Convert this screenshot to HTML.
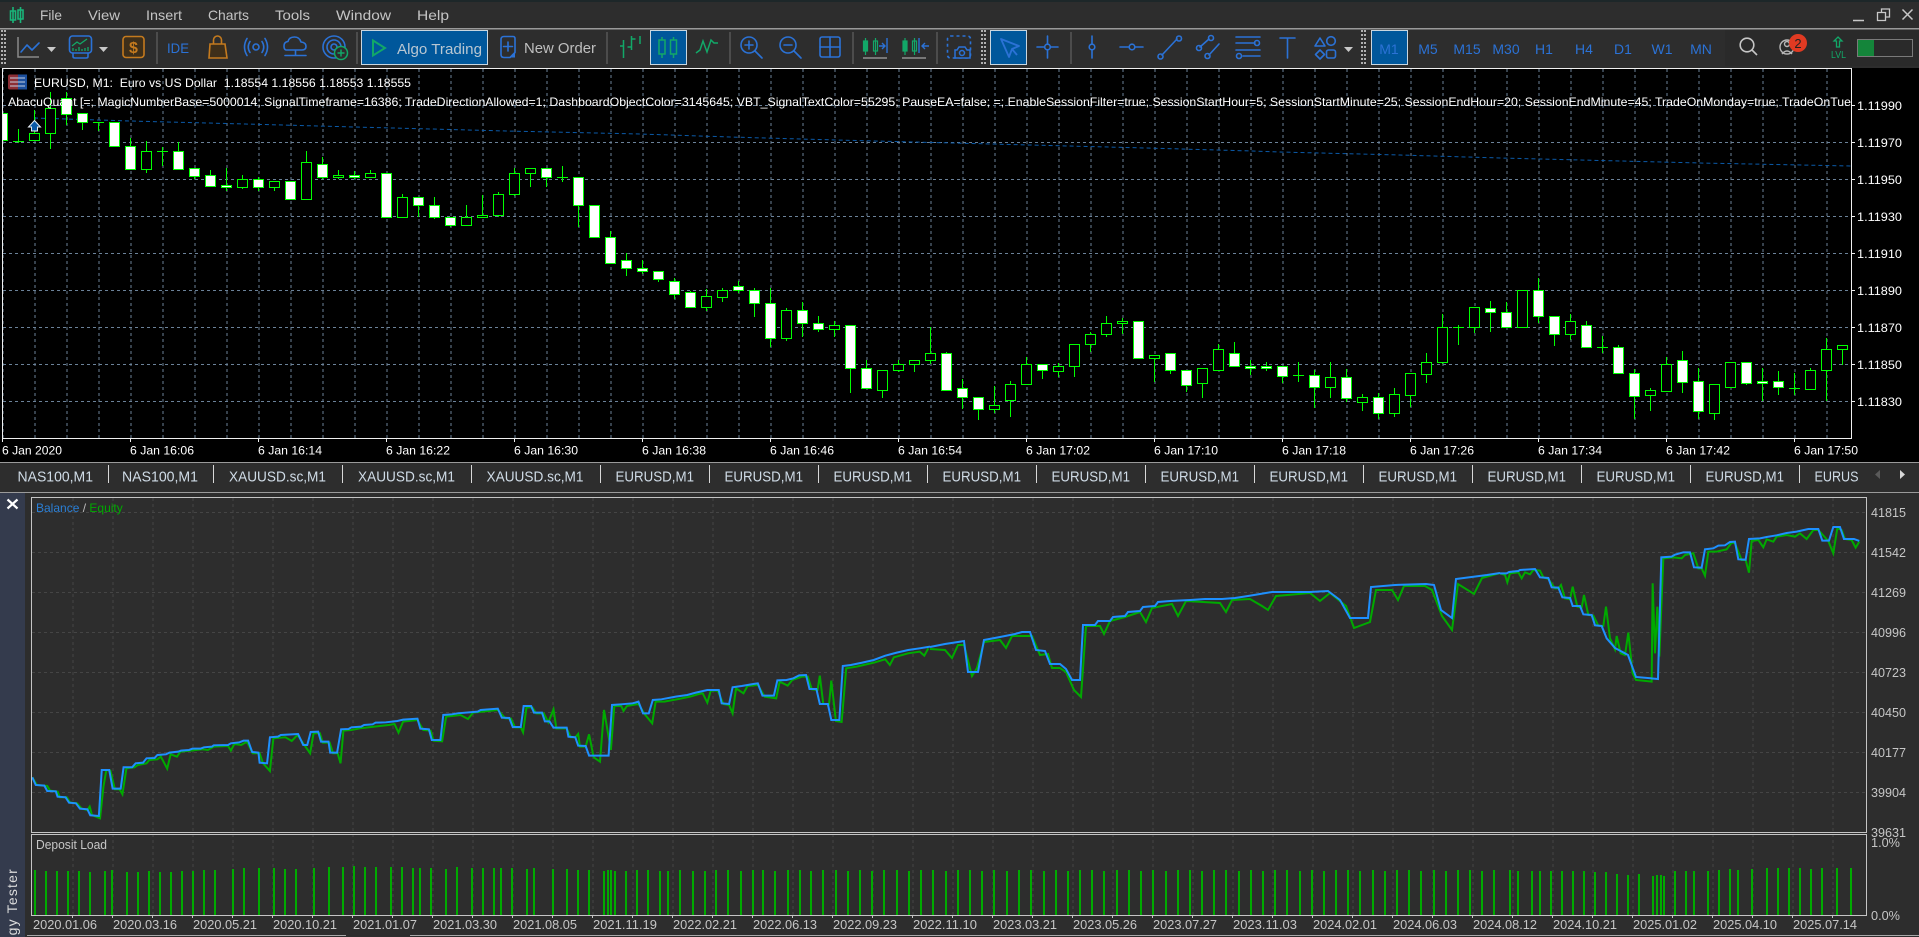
<!DOCTYPE html>
<html lang="en"><head><meta charset="utf-8"><title>MetaTrader 5</title>
<style>
html,body{margin:0;padding:0;background:#2d2d2d;overflow:hidden}
svg{display:block;font-family:"Liberation Sans",Arial,sans-serif}
.m{font-size:14px;fill:#c4c4c4}
.tf{font-size:14px;fill:#2b72d6;text-anchor:middle}
.t{font-size:12px;fill:#fff}
.p{font-size:12px;fill:#fff}
.tab{font-size:15px;fill:#cfdbe6}
.q{font-size:13px;fill:#c6c6c6}
.d{font-size:12.5px;fill:#c6c6c6}
.b{fill:none;stroke:#2b72d6;stroke-width:1.6;stroke-linecap:round;stroke-linejoin:round}
.g{fill:none;stroke:#12a868;stroke-width:1.5}
.o{fill:none;stroke:#c47a1e;stroke-width:1.6}
.s{stroke:#6a6a6a;stroke-width:1}
</style></head><body>
<svg width="1919" height="937" viewBox="0 0 1919 937" xmlns="http://www.w3.org/2000/svg">
<rect width="1919" height="937" fill="#2d2d2d"/>
<rect width="1919" height="2" fill="#1d2729"/>
<rect y="28" width="1919" height="1.5" fill="#9a9a9a"/>
<rect x="1725" y="30" width="194" height="36" fill="#2a2a2a"/>

<!-- menu -->
<path d="M13 7v16M10.5 11h5v9h-5zM20.5 7v16M18 10h5v9h-5z" fill="none" stroke="#19b57a" stroke-width="1.6"/>
<text class="m" x="40" y="20" textLength="22" lengthAdjust="spacingAndGlyphs">File</text>
<text class="m" x="88" y="20" textLength="32" lengthAdjust="spacingAndGlyphs">View</text>
<text class="m" x="146" y="20" textLength="36" lengthAdjust="spacingAndGlyphs">Insert</text>
<text class="m" x="208" y="20" textLength="41" lengthAdjust="spacingAndGlyphs">Charts</text>
<text class="m" x="275" y="20" textLength="35" lengthAdjust="spacingAndGlyphs">Tools</text>
<text class="m" x="336" y="20" textLength="55" lengthAdjust="spacingAndGlyphs">Window</text>
<text class="m" x="417" y="20" textLength="32" lengthAdjust="spacingAndGlyphs">Help</text>
<g fill="none" stroke="#c8c8c8" stroke-width="1.3">
<path d="M1853 20.5h11" stroke-width="1.5"/><path d="M1877.5 12.5h8v8h-8zM1881.5 12.5v-3.5h8v8h-4"/><path d="M1902.5 9.5l10 10M1912.5 9.5l-10 10" stroke-width="1.5"/>
</g>

<!-- grips -->
<g fill="none" stroke="#d0d0d0" stroke-width="1.6" stroke-dasharray="2 2"><path d="M2 30v36M5 30v36M982 30v36M985 30v36M1362 30v36M1365 30v36"/></g>
<g class="s"><path d="M157 32v32M357 32v32M607 32v32M730 32v32M853 32v32M937 32v32M1071 32v32"/></g>

<!-- left toolbar icons -->
<path d="M18 37v20h21" fill="none" stroke="#8a8a8a" stroke-width="1.5"/>
<path class="b" d="M21 52l6-7 5 5 7-7"/>
<path d="M47 47h9l-4.5 5z" fill="#c8c8c8"/>
<rect x="69.5" y="36" width="22" height="17" rx="3" class="b"/><path class="b" d="M73 53v3.5q0 1.5 2 1.5h11q2 0 2-1.5V53"/>
<path d="M72 46l5-4 3 2 7-5" fill="none" stroke="#12a868" stroke-width="1.3"/><path d="M73 51v-3M76 51v-2M79 51v-4M82 51v-2M85 51v-3M88 51v-4" stroke="#12a868" stroke-width="1.3"/>
<path d="M99 47h9l-4.5 5z" fill="#c8c8c8"/>
<rect x="123" y="36.5" width="21" height="21" rx="3" fill="#3e2f1a" stroke="#c47a1e" stroke-width="1.6"/>
<text x="133.5" y="53" text-anchor="middle" font-size="16" font-weight="bold" fill="#c47a1e">$</text>
<text x="167" y="53" font-size="14" fill="#2b72d6" textLength="22" lengthAdjust="spacingAndGlyphs">IDE</text>
<path d="M210 44h15l2 14h-18z" fill="#3e2f1a" stroke="#c47a1e" stroke-width="1.6"/><path class="o" d="M213.5 44v-4a4 4 0 0 1 8 0v4"/>
<g class="b"><circle cx="256" cy="47" r="3"/><path d="M250 41.5q-3.5 5.5 0 11M262 41.5q3.5 5.5 0 11M247 38.5q-5 8.500 0 17M265 38.5q5 8.500 0 17"/></g>
<g class="b"><path d="M288 50h-2q-2-.5-2-4 0-4 4-4.500 1-4.500 6.500-4.500 5 0 6.500 5 5 .5 5 4.500 0 3.500-4 3.500zM295.5 50v5M285 55.5h21"/></g>
<g class="b"><circle cx="334" cy="47" r="11"/><circle cx="334" cy="47" r="7"/><circle cx="334" cy="47" r="3"/></g>
<circle cx="341" cy="53" r="6.5" fill="#2d2d2d" stroke="#12a868" stroke-width="1.5"/><path d="M341 49.5v7M337.5 53h7" stroke="#12a868" stroke-width="1.5"/>

<rect x="361.5" y="30.5" width="126" height="34" fill="#00579b" stroke="#c9d6df"/>
<path d="M373 40.5l12 7.5-12 7.500z" fill="none" stroke="#12a868" stroke-width="2"/>
<text x="397" y="54" font-size="15" fill="#b9c7d2" textLength="85" lengthAdjust="spacingAndGlyphs">Algo Trading</text>
<path class="b" d="M504 36.5h9q2 0 2 2v14l-5 5h-6q-3 0-3-3v-15q0-3 3-3zM508 42v9M503.5 46.5h9"/>
<path d="M515 52l-5 5.500h5z" fill="#2b72d6"/>
<text x="524" y="53" font-size="15" fill="#bfbfbf" textLength="72" lengthAdjust="spacingAndGlyphs">New Order</text>

<!-- chart type -->
<path d="M623.5 40v18M620 46h3.5v6M631.5 36v14M631.5 39h4M631.5 47h-4" fill="none" stroke="#12a868" stroke-width="1.5"/>
<path d="M640 36v8" stroke="#12a868" stroke-width="1.5"/>
<rect x="650.5" y="30.5" width="36" height="34" fill="#00579b" stroke="#c9d6df"/>
<path d="M662 37v21M673.5 37v21" stroke="#12a868" stroke-width="1.5"/>
<rect x="659" y="40" width="6" height="14" fill="#00579b" stroke="#12a868" stroke-width="1.5"/>
<rect x="670.5" y="40" width="6" height="14" fill="#00579b" stroke="#12a868" stroke-width="1.5"/>
<path class="g" d="M696 53l4-3 3-9 4 11 4-12 3 3h4"/>
<g class="b"><circle cx="749" cy="45" r="8"/><path d="M755 51l7 7M745 45h8M749 41v8"/><circle cx="788" cy="45" r="8"/><path d="M794 51l7 7M784 45h8"/><rect x="820" y="37" width="20" height="20" rx="2"/><path d="M830 37v20M820 47h20"/></g>
<g stroke="#12a868" stroke-width="1.2" fill="none"><path d="M865.500 38v17M875.500 38v17"/><rect x="863.500" y="41" width="4" height="10" fill="#12a868"/><rect x="873.500" y="41" width="4" height="10"/><path d="M905 38v17M914.500 38v17"/><rect x="903" y="41" width="4" height="10" fill="#12a868"/><rect x="912.500" y="41" width="4" height="10"/></g>
<path d="M879 46h6M882 43l3 3-3 3M887 38v15" fill="none" stroke="#2b72d6" stroke-width="1.4"/>
<path d="M919 38v15M922 46h7M925 43l-3 3 3 3" fill="none" stroke="#2b72d6" stroke-width="1.4"/>
<path d="M863 58h24M902 58h24" stroke="#909090" stroke-width="1.5"/>
<rect x="947.5" y="36" width="23" height="22" rx="3" fill="none" stroke="#2b72d6" stroke-width="1.6" stroke-dasharray="3 3"/>
<path d="M955 50h2l2-3h6l2 3h3v8h-15z" fill="#2d2d2d" stroke="#2b72d6" stroke-width="1.5"/><circle cx="962" cy="53" r="2.5" fill="none" stroke="#2b72d6" stroke-width="1.5"/>

<!-- tools -->
<rect x="990.5" y="30.5" width="36" height="34" fill="#00579b" stroke="#c9d6df"/>
<path d="M1001 39l18 7-7 3-3 8z" fill="none" stroke="#2b72d6" stroke-width="1.8" stroke-linejoin="round"/><path d="M1012 49l5 6" stroke="#2b72d6" stroke-width="1.8"/>
<g class="b"><path d="M1047.5 36v8M1047.5 50v8M1037 47h7M1051 47h7"/><circle cx="1047.5" cy="47" r="2.8"/>
<path d="M1092 36v8M1092 50v8"/><circle cx="1092" cy="47" r="2.8"/>
<path d="M1120 47h9M1135 47h8"/><circle cx="1132" cy="47" r="2.8"/>
<path d="M1162 55l15-16"/><circle cx="1160.5" cy="56.5" r="2.5"/><circle cx="1179" cy="38.5" r="2.5"/>
<path d="M1200 47l9-8M1209 55l10-11"/><circle cx="1199" cy="48" r="2.5"/><circle cx="1211" cy="38" r="2.5"/><circle cx="1207.5" cy="56" r="2.5"/>
<path d="M1236 37h24M1236 43h19M1236 50h24M1243 56h17"/><circle cx="1257" cy="43" r="2.5"/><circle cx="1239" cy="56" r="2.5"/>
<path d="M1280 38h15M1287.5 38v20"/>
<path d="M1315 46l5-8 5 8z"/><circle cx="1331" cy="41" r="4.3"/><path d="M1320 50l4.5 4.500-4.5 4.500-4.5-4.500z"/><rect x="1326.5" y="50" width="9" height="8" rx="2"/></g>
<path d="M1344 47h9l-4.5 5z" fill="#c8c8c8"/>

<!-- timeframes -->
<rect x="1371.5" y="30.5" width="36" height="34" fill="#00579b" stroke="#c9d6df"/>
<text class="tf" x="1389" y="54">M1</text><text class="tf" x="1428" y="54">M5</text><text class="tf" x="1467" y="54">M15</text><text class="tf" x="1506" y="54">M30</text><text class="tf" x="1544" y="54">H1</text><text class="tf" x="1584" y="54">H4</text><text class="tf" x="1623" y="54">D1</text><text class="tf" x="1662" y="54">W1</text><text class="tf" x="1701" y="54">MN</text>
<g fill="none" stroke="#c6c6c6" stroke-width="1.6"><circle cx="1747" cy="45" r="6.8"/><path d="M1752 50l5 5"/></g>
<g fill="none" stroke="#b8b8b8" stroke-width="1.4"><circle cx="1787" cy="47" r="7"/><circle cx="1787" cy="44" r="2.5"/><path d="M1782 54q5-6 10 0"/></g>
<circle cx="1798" cy="43" r="9" fill="#e03a22"/><text x="1798" y="48" text-anchor="middle" font-size="13" fill="#222">2</text>
<path d="M1838 37l4 4h-2.5v6h-3v-6H1834z" fill="none" stroke="#12a868" stroke-width="1.3"/><text x="1831" y="58" font-size="10" fill="#12a868" textLength="15" lengthAdjust="spacingAndGlyphs">LVL</text>
<rect x="1857.5" y="39.5" width="55" height="17" fill="#2a2a2a" stroke="#7a7a7a"/><rect x="1858" y="40" width="16" height="16" fill="#14853a"/>

<!-- chart -->
<rect x="0" y="67" width="1919" height="396" fill="#000"/>
<rect x="0" y="67" width="1919" height="1" fill="#2d2d2d"/>
<g fill="none" stroke="#6b8299" stroke-width="1" stroke-dasharray="3 3" shape-rendering="crispEdges">
<path d="M3 69V438M35 69V438M67 69V438M99 69V438M131 69V438M163 69V438M195 69V438M227 69V438M259 69V438M291 69V438M323 69V438M355 69V438M387 69V438M419 69V438M451 69V438M483 69V438M515 69V438M547 69V438M579 69V438M611 69V438M643 69V438M675 69V438M707 69V438M739 69V438M771 69V438M803 69V438M835 69V438M867 69V438M899 69V438M931 69V438M963 69V438M995 69V438M1027 69V438M1059 69V438M1091 69V438M1123 69V438M1155 69V438M1187 69V438M1219 69V438M1251 69V438M1283 69V438M1315 69V438M1347 69V438M1379 69V438M1411 69V438M1443 69V438M1475 69V438M1507 69V438M1539 69V438M1571 69V438M1603 69V438M1635 69V438M1667 69V438M1699 69V438M1731 69V438M1763 69V438M1795 69V438M1827 69V438"/>
<path d="M3 105.500H1851M3 142.500H1851M3 179.500H1851M3 216.500H1851M3 253.500H1851M3 290.500H1851M3 327.500H1851M3 364.500H1851M3 401.500H1851"/>
</g>
<path d="M34 118L130 121L245 124L355 127L506 131L640 134L730 137L836 140L991 144L1146 148L1252 151L1280 152L1400 155L1500 158L1700 163L1851 166" fill="none" stroke="#0b5aa8" stroke-width="1" stroke-dasharray="4 3"/>

<g shape-rendering="crispEdges">
<path fill="none" stroke="#00ff00" d="M18.500 129V143M13 141.500H24M34.500 110V140M50.500 92V149M66.500 92V125M82.500 113V130M98.500 122V131M93 122.500H104M130.500 138V169M146.500 141V173M162.500 147V166M157 151.500H168M178.500 142V169M194.500 168V179M210.500 170V187M226.500 168V191M242.500 175V189M258.500 177V191M274.500 181V191M306.500 151V199M322.500 157V179M338.500 170V179M354.500 171V179M370.500 170V177M402.500 194V217M418.500 197V217M434.500 197V219M450.500 217V227M466.500 205V225M482.500 195V217M498.500 192V217M514.500 168V196M530.500 168V187M546.500 168V187M562.500 166V182M557 177.500H568M578.500 177V227M610.500 231V263M626.500 253V276M642.500 260V274M658.500 271V282M674.500 278V299M690.500 291V307M706.500 289V311M722.500 288V302M738.500 281V293M754.500 288V317M770.500 288V347M786.500 308V341M802.500 302V337M818.500 316V332M834.500 321V337M850.500 325V393M866.500 360V388M882.500 370V398M898.500 360V372M914.500 360V372M930.500 327V364M946.500 352V390M962.500 379V409M978.500 397V420M994.500 386V413M1010.500 381V417M1026.500 357V384M1042.500 364V379M1058.500 363V377M1074.500 344V377M1090.500 332V352M1106.500 316V337M1122.500 318V334M1154.500 355V382M1170.500 353V374M1186.500 370V392M1202.500 368V398M1218.500 344V370M1234.500 342V366M1250.500 360V375M1266.500 362V371M1282.500 366V383M1298.500 362V382M1293 375.500H1304M1314.500 370V408M1330.500 362V398M1346.500 369V402M1362.500 394V411M1378.500 393V419M1394.500 388V417M1410.500 373V407M1426.500 353V383M1442.500 314V364M1458.500 325V345M1453 327.500H1464M1474.500 307V333M1490.500 301V332M1506.500 302V327M1538.500 278V323M1554.500 316V346M1570.500 314V340M1586.500 321V347M1602.500 336V353M1597 347.500H1608M1618.500 345V373M1634.500 369V419M1650.500 388V411M1666.500 357V391M1682.500 351V393M1698.500 368V419M1714.500 384V420M1746.500 362V385M1762.500 368V401M1778.500 371V395M1794.500 373V395M1789 388.500H1800M1810.500 368V389M1826.500 338V401M1842.500 345V365"/>
<path fill="#000" stroke="#00ff00" d="M29.500 133.500h10V140.500h-10zM45.500 108.500h10V133.500h-10zM141.500 151.500h10V169.500h-10zM237.500 179.500h10V187.500h-10zM269.500 181.500h10V187.500h-10zM301.500 162.500h10V199.500h-10zM333.500 175.500h10V177.500h-10zM365.500 173.500h10V177.500h-10zM397.500 197.500h10V217.500h-10zM461.500 217.500h10V225.500h-10zM477.500 215.500h10V217.500h-10zM493.500 194.500h10V215.500h-10zM509.500 173.500h10V194.500h-10zM525.500 168.500h10V173.500h-10zM701.500 296.500h10V307.500h-10zM717.500 290.500h10V297.500h-10zM781.500 310.500h10V338.500h-10zM829.500 325.500h10V329.500h-10zM877.500 370.500h10V390.500h-10zM893.500 364.500h10V370.500h-10zM909.500 360.500h10V364.500h-10zM925.500 353.500h10V360.500h-10zM989.500 405.500h10V409.500h-10zM1005.500 384.500h10V400.500h-10zM1021.500 364.500h10V384.500h-10zM1053.500 366.500h10V371.500h-10zM1069.500 344.500h10V366.500h-10zM1085.500 334.500h10V344.500h-10zM1101.500 323.500h10V334.500h-10zM1117.500 321.500h10V323.500h-10zM1149.500 355.500h10V358.500h-10zM1197.500 368.500h10V383.500h-10zM1213.500 349.500h10V370.500h-10zM1325.500 377.500h10V387.500h-10zM1357.500 397.500h10V402.500h-10zM1389.500 394.500h10V413.500h-10zM1405.500 373.500h10V395.500h-10zM1421.500 362.500h10V374.500h-10zM1437.500 327.500h10V362.500h-10zM1469.500 307.500h10V327.500h-10zM1517.500 290.500h10V327.500h-10zM1565.500 321.500h10V334.500h-10zM1645.500 390.500h10V395.500h-10zM1661.500 364.500h10V391.500h-10zM1709.500 384.500h10V413.500h-10zM1725.500 362.500h10V387.500h-10zM1805.500 370.500h10V389.500h-10zM1821.500 349.500h10V370.500h-10zM1837.500 345.500h10V349.500h-10z"/>
<path fill="#fff" stroke="#00ff00" d="M2.500 113.500H7.500V140.500H2.500zM61.500 98.500h10V114.500h-10zM77.500 113.500h10V122.500h-10zM109.500 122.500h10V146.500h-10zM125.500 146.500h10V169.500h-10zM173.500 151.500h10V169.500h-10zM189.500 168.500h10V176.500h-10zM205.500 175.500h10V186.500h-10zM221.500 185.500h10V187.500h-10zM253.500 179.500h10V187.500h-10zM285.500 181.500h10V199.500h-10zM317.500 164.500h10V177.500h-10zM349.500 175.500h10V177.500h-10zM381.500 173.500h10V217.500h-10zM413.500 197.500h10V205.500h-10zM429.500 205.500h10V217.500h-10zM445.500 217.500h10V225.500h-10zM541.500 168.500h10V177.500h-10zM573.500 177.500h10V205.500h-10zM589.500 205.500h10V237.500h-10zM605.500 237.500h10V263.500h-10zM621.500 260.500h10V268.500h-10zM637.500 268.500h10V271.500h-10zM653.500 271.500h10V279.500h-10zM669.500 281.500h10V294.500h-10zM685.500 292.500h10V307.500h-10zM733.500 286.500h10V290.500h-10zM749.500 290.500h10V303.500h-10zM765.500 303.500h10V338.500h-10zM797.500 310.500h10V323.500h-10zM813.500 323.500h10V329.500h-10zM845.500 325.500h10V368.500h-10zM861.500 368.500h10V388.500h-10zM941.500 353.500h10V390.500h-10zM957.500 388.500h10V397.500h-10zM973.500 397.500h10V409.500h-10zM1037.500 364.500h10V370.500h-10zM1133.500 321.500h10V358.500h-10zM1165.500 353.500h10V370.500h-10zM1181.500 370.500h10V385.500h-10zM1229.500 353.500h10V366.500h-10zM1245.500 366.500h10V368.500h-10zM1261.500 366.500h10V368.500h-10zM1277.500 366.500h10V376.500h-10zM1309.500 375.500h10V387.500h-10zM1341.500 377.500h10V398.500h-10zM1373.500 397.500h10V413.500h-10zM1485.500 308.500h10V312.500h-10zM1501.500 312.500h10V327.500h-10zM1533.500 290.500h10V316.500h-10zM1549.500 316.500h10V334.500h-10zM1581.500 325.500h10V347.500h-10zM1613.500 347.500h10V373.500h-10zM1629.500 373.500h10V396.500h-10zM1677.500 360.500h10V382.500h-10zM1693.500 381.500h10V411.500h-10zM1741.500 362.500h10V383.500h-10zM1757.500 381.500h10V383.500h-10zM1773.500 381.500h10V387.500h-10z"/>
</g>
<path d="M34.500 120.500l6 6.500h-3v4h-6v-4h-3z" fill="#0b5aa8" stroke="#e8eef4" stroke-width="1"/>
<!-- frame -->
<path d="M2.500 68.500H1851.500V438.500H2.500z" fill="none" stroke="#f0f0f0" shape-rendering="crispEdges"/>
<path d="M1851 105.500h4M1851 142.500h4M1851 179.500h4M1851 216.500h4M1851 253.500h4M1851 290.500h4M1851 327.500h4M1851 364.500h4M1851 401.500h4M2.500 438v4M130.500 438v4M258.500 438v4M386.500 438v4M514.500 438v4M642.500 438v4M770.500 438v4M898.500 438v4M1026.500 438v4M1154.500 438v4M1282.500 438v4M1410.500 438v4M1538.500 438v4M1666.500 438v4M1794.500 438v4" stroke="#f0f0f0" shape-rendering="crispEdges"/>
<!-- chart info -->
<rect x="8" y="74.500" width="19" height="15" rx="2" fill="#8d2f36"/><rect x="18" y="74.500" width="9" height="15" fill="#1c4f9c"/><path d="M10 78h15M10 82h15M10 86h15" stroke="#c5cfe0" stroke-width="1"/>
<text x="34" y="87" font-size="12" fill="#fff" xml:space="preserve" textLength="377" lengthAdjust="spacingAndGlyphs">EURUSD, M1:  Euro vs US Dollar  1.18554 1.18556 1.18553 1.18555</text>
<text x="8" y="106" font-size="12" fill="#fff" textLength="1843" lengthAdjust="spacingAndGlyphs">AbacuQuant [=; MagicNumberBase=5000014; SignalTimeframe=16386; TradeDirectionAllowed=1; DashboardObjectColor=3145645; VBT_SignalTextColor=55295; PauseEA=false; =; EnableSessionFilter=true; SessionStartHour=5; SessionStartMinute=25; SessionEndHour=20; SessionEndMinute=45; TradeOnMonday=true; TradeOnTue</text>
<!-- prices -->
<g><text class="p" x="1857" y="110" textLength="45" lengthAdjust="spacingAndGlyphs">1.11990</text><text class="p" x="1857" y="147" textLength="45" lengthAdjust="spacingAndGlyphs">1.11970</text><text class="p" x="1857" y="184" textLength="45" lengthAdjust="spacingAndGlyphs">1.11950</text><text class="p" x="1857" y="221" textLength="45" lengthAdjust="spacingAndGlyphs">1.11930</text><text class="p" x="1857" y="258" textLength="45" lengthAdjust="spacingAndGlyphs">1.11910</text><text class="p" x="1857" y="295" textLength="45" lengthAdjust="spacingAndGlyphs">1.11890</text><text class="p" x="1857" y="332" textLength="45" lengthAdjust="spacingAndGlyphs">1.11870</text><text class="p" x="1857" y="369" textLength="45" lengthAdjust="spacingAndGlyphs">1.11850</text><text class="p" x="1857" y="406" textLength="45" lengthAdjust="spacingAndGlyphs">1.11830</text></g>
<!-- times -->
<g><text class="t" x="2" y="454.500" textLength="60" lengthAdjust="spacingAndGlyphs">6 Jan 2020</text><text class="t" x="130" y="454.500" textLength="64" lengthAdjust="spacingAndGlyphs">6 Jan 16:06</text><text class="t" x="258" y="454.500" textLength="64" lengthAdjust="spacingAndGlyphs">6 Jan 16:14</text><text class="t" x="386" y="454.500" textLength="64" lengthAdjust="spacingAndGlyphs">6 Jan 16:22</text><text class="t" x="514" y="454.500" textLength="64" lengthAdjust="spacingAndGlyphs">6 Jan 16:30</text><text class="t" x="642" y="454.500" textLength="64" lengthAdjust="spacingAndGlyphs">6 Jan 16:38</text><text class="t" x="770" y="454.500" textLength="64" lengthAdjust="spacingAndGlyphs">6 Jan 16:46</text><text class="t" x="898" y="454.500" textLength="64" lengthAdjust="spacingAndGlyphs">6 Jan 16:54</text><text class="t" x="1026" y="454.500" textLength="64" lengthAdjust="spacingAndGlyphs">6 Jan 17:02</text><text class="t" x="1154" y="454.500" textLength="64" lengthAdjust="spacingAndGlyphs">6 Jan 17:10</text><text class="t" x="1282" y="454.500" textLength="64" lengthAdjust="spacingAndGlyphs">6 Jan 17:18</text><text class="t" x="1410" y="454.500" textLength="64" lengthAdjust="spacingAndGlyphs">6 Jan 17:26</text><text class="t" x="1538" y="454.500" textLength="64" lengthAdjust="spacingAndGlyphs">6 Jan 17:34</text><text class="t" x="1666" y="454.500" textLength="64" lengthAdjust="spacingAndGlyphs">6 Jan 17:42</text><text class="t" x="1794" y="454.500" textLength="64" lengthAdjust="spacingAndGlyphs">6 Jan 17:50</text></g>

<!-- tabs -->
<rect y="462" width="1919" height="31" fill="#2d2d2d"/>
<rect y="462" width="1919" height="1" fill="#9a9a9a"/><rect y="492" width="1919" height="1" fill="#9a9a9a"/>
<path d="M108.500 465v18M213.500 465v18M342.500 465v18M471.500 465v18M600.500 465v18M709.500 465v18M818.500 465v18M927.500 465v18M1036.500 465v18M1145.500 465v18M1254.500 465v18M1363.500 465v18M1472.500 465v18M1581.500 465v18M1690.500 465v18M1799.500 465v18" stroke="#d8d8d8" shape-rendering="crispEdges"/>
<g>
<text class="tab" x="17.500" y="481.500" textLength="75.500" lengthAdjust="spacingAndGlyphs">NAS100,M1</text><text class="tab" x="122" y="481.500" textLength="76" lengthAdjust="spacingAndGlyphs">NAS100,M1</text>
<text class="tab" x="229" y="481.500" textLength="97" lengthAdjust="spacingAndGlyphs">XAUUSD.sc,M1</text><text class="tab" x="358" y="481.500" textLength="97" lengthAdjust="spacingAndGlyphs">XAUUSD.sc,M1</text><text class="tab" x="486.500" y="481.500" textLength="97" lengthAdjust="spacingAndGlyphs">XAUUSD.sc,M1</text>
<text class="tab" x="615.500" y="481.500" textLength="78.500" lengthAdjust="spacingAndGlyphs">EURUSD,M1</text><text class="tab" x="724.500" y="481.500" textLength="78.500" lengthAdjust="spacingAndGlyphs">EURUSD,M1</text><text class="tab" x="833.500" y="481.500" textLength="78.500" lengthAdjust="spacingAndGlyphs">EURUSD,M1</text><text class="tab" x="942.500" y="481.500" textLength="78.500" lengthAdjust="spacingAndGlyphs">EURUSD,M1</text><text class="tab" x="1051.500" y="481.500" textLength="78.500" lengthAdjust="spacingAndGlyphs">EURUSD,M1</text><text class="tab" x="1160.500" y="481.500" textLength="78.500" lengthAdjust="spacingAndGlyphs">EURUSD,M1</text><text class="tab" x="1269.500" y="481.500" textLength="78.500" lengthAdjust="spacingAndGlyphs">EURUSD,M1</text><text class="tab" x="1378.500" y="481.500" textLength="78.500" lengthAdjust="spacingAndGlyphs">EURUSD,M1</text><text class="tab" x="1487.500" y="481.500" textLength="78.500" lengthAdjust="spacingAndGlyphs">EURUSD,M1</text><text class="tab" x="1596.500" y="481.500" textLength="78.500" lengthAdjust="spacingAndGlyphs">EURUSD,M1</text><text class="tab" x="1705.500" y="481.500" textLength="78.500" lengthAdjust="spacingAndGlyphs">EURUSD,M1</text><text class="tab" x="1814.500" y="481.500" textLength="44" lengthAdjust="spacingAndGlyphs">EURUS</text>
</g>
<path d="M1880 470v9l-5-4.500z" fill="#5a5a5a"/><path d="M1900 470v9l5-4.500z" fill="#d8d8d8"/>

<!-- tester -->
<rect x="0" y="493" width="25" height="444" fill="#343b4d"/>
<path d="M7.500 499.500l10 9M17.500 499.500l-10 9" stroke="#fff" stroke-width="2.2"/>
<text transform="translate(17 868) rotate(-90)" text-anchor="end" font-size="14" fill="#dcdcdc" letter-spacing="1.2">Strategy Tester</text>
<!-- panel grids -->
<g fill="none" stroke="#454545" stroke-dasharray="3 3" shape-rendering="crispEdges">
<path d="M73 498V915M113 498V915M153 498V915M193 498V915M233 498V915M273 498V915M313 498V915M353 498V915M393 498V915M433 498V915M473 498V915M513 498V915M553 498V915M593 498V915M633 498V915M673 498V915M713 498V915M753 498V915M793 498V915M833 498V915M873 498V915M913 498V915M953 498V915M993 498V915M1033 498V915M1073 498V915M1113 498V915M1153 498V915M1193 498V915M1233 498V915M1273 498V915M1313 498V915M1353 498V915M1393 498V915M1433 498V915M1473 498V915M1513 498V915M1553 498V915M1593 498V915M1633 498V915M1673 498V915M1713 498V915M1753 498V915M1793 498V915M1833 498V915"/>
<path d="M32 512.500H1866M32 552.500H1866M32 592.500H1866M32 632.500H1866M32 672.500H1866M32 712.500H1866M32 752.500H1866M32 792.500H1866"/>
</g>
<!-- equity / balance -->
<g transform="translate(30 520) scale(.574 .3333)" fill="none" stroke-linejoin="miter">
<polyline vector-effect="non-scaling-stroke" stroke="#00aa00" stroke-width="2" points="4,772 12,795 30,798 35,812 48,815 52,832 64,832 70,848 82,850 90,866 100,870 104,860 108,885 122,895 128,800 133,750 140,752 148,808 156,808 161,823 168,745 182,742 188,735 203,730 208,720 222,718 228,710 239,746 245,703 256,710 262,695 280,692 300,688 310,690 320,680 345,678 350,692 356,672 368,675 378,665 388,700 400,700 406,730 418,753 424,655 445,652 456,663 466,645 480,680 488,700 494,640 505,640 510,668 522,668 528,700 536,700 541,730 546,632 560,630 575,625 600,620 625,615 635,612 642,638 650,605 675,600 685,630 698,632 703,662 718,664 725,590 750,585 763,597 772,578 815,570 828,595 838,596 845,622 855,622 859,637 865,562 875,562 882,580 895,580 903,607 912,568 917,625 935,625 942,652 950,652 955,642 958,680 968,680 974,643 982,712 993,725 1000,570 1012,690 1018,558 1030,558 1034,573 1040,558 1060,552 1072,585 1084,610 1090,545 1105,545 1130,537 1150,530 1165,522 1172,520 1180,548 1186,512 1198,512 1208,552 1218,555 1224,580 1230,505 1243,520 1250,498 1268,495 1280,530 1300,535 1306,485 1320,497 1328,480 1345,470 1355,470 1362,508 1372,510 1376,467 1382,552 1392,553 1396,482 1404,603 1414,606 1422,445 1440,440 1470,428 1490,418 1498,435 1505,412 1530,400 1550,395 1558,407 1565,385"/>
<polyline vector-effect="non-scaling-stroke" stroke="#1e90ff" stroke-width="2" points="4,772 10,795 25,797 30,813 45,814 48,830 62,832 68,848 80,850 87,866 100,868 105,886 120,888 125,750 138,750 144,806 158,806 163,742 178,742 184,730 197,728 203,715 217,714 222,705 237,703 243,698 258,695 263,692 277,690 283,686 297,686 303,682 317,680 320,676 345,675 350,670 365,667 372,662 380,662 387,696 398,698 400,728 413,730 418,652 432,650 437,645 467,642 476,675 483,675 489,636 502,635 507,665 520,665 523,698 535,698 542,628 555,627 560,622 577,620 582,615 597,613 602,608 620,607 640,603 650,599 675,596 680,626 695,628 700,660 715,660 720,585 735,583 745,580 780,575 785,570 815,566 822,593 835,594 841,621 855,621 860,558 873,558 878,578 892,578 897,604 905,604 912,623 935,623 938,650 950,652 955,677 968,678 974,707 1008,707 1014,555 1030,553 1050,550 1060,545 1068,580 1078,580 1085,540 1100,538 1125,530 1145,525 1160,518 1180,510 1200,510 1205,550 1218,552 1224,502 1240,498 1260,492 1268,490 1276,527 1296,527 1302,481 1318,480 1330,475 1340,466 1352,465 1358,507 1370,507 1376,552 1390,552 1396,600 1410,600 1416,438 1430,435 1450,428 1470,420 1490,407 1510,398 1530,390 1550,385 1568,380"/>
</g>
<g fill="none">
<polyline stroke="#00aa00" stroke-width="2" points="930,649 945,650 952,658 958,645 964,645 972,676 977,668 984,642 1000,640 1006,648 1012,636 1022,636 1032,636 1040,655 1048,654 1052,668 1060,668 1066,672 1074,690 1081,697 1086,626 1100,626 1104,634 1110,621 1125,617 1140,612 1146,622 1152,608 1172,604 1178,616 1186,601 1220,603 1226,612 1232,600 1250,599 1262,606 1268,610 1276,596 1310,593 1320,601 1330,593 1346,606 1354,628 1370,622 1376,590 1392,590 1398,600 1404,586 1425,586 1432,590 1442,616 1452,630 1458,584 1474,594 1482,578 1500,573"/>
<polyline stroke="#1e90ff" stroke-width="2" points="930,647 945,644 958,642 964,641 968,672 978,672 984,640 1000,637 1015,634 1022,632 1030,632 1036,650 1045,651 1050,664 1060,664 1066,669 1072,680 1080,680 1083,625 1095,625 1098,621 1110,621 1113,617 1125,616 1128,612 1140,611 1143,607 1155,606 1158,602 1170,601 1190,600 1205,599 1222,599 1235,598 1248,596 1260,594 1272,592 1310,592 1328,591 1340,600 1350,618 1368,618 1371,587 1395,585 1426,584 1434,585 1441,610 1452,618 1456,579 1487,575 1500,573"/>
</g>
<g transform="translate(1500 440) scale(.3333)" fill="none">
<polyline vector-effect="non-scaling-stroke" stroke="#00aa00" stroke-width="2" points="0,400 15,405 22,427 30,400 55,397 65,415 75,397 90,403 100,390 120,392 130,412 145,417 165,445 175,445 183,435 195,475 210,478 218,440 232,500 245,503 252,465 265,525 280,527 295,557 310,558 318,500 330,595 345,628 350,588 362,640 375,645 385,578 398,700 408,720 455,725 458,430 465,640 472,500 478,650 490,355 520,352 545,355 555,345 580,340 595,385 605,385 615,407 625,335 650,335 680,328 695,308 705,310 725,360 737,360 747,398 755,303 775,300 790,322 800,298 820,305 830,290 860,285 885,290 900,280 920,297 940,270 955,270 985,303 1000,340 1012,265 1025,270 1035,297 1055,300 1067,323 1078,305"/>
<polyline vector-effect="non-scaling-stroke" stroke="#1e90ff" stroke-width="2" points="0,400 20,400 27,396 55,393 60,390 105,387 120,412 145,414 155,442 175,443 187,472 210,474 218,498 240,498 250,523 275,525 285,556 305,558 320,595 345,624 384,645 408,711 474,717 484,352 515,350 525,344 550,337 570,337 582,382 605,383 615,328 640,325 655,317 675,316 690,306 705,305 715,358 737,359 747,297 780,295 800,291 830,286 860,279 890,275 925,267 955,267 967,302 987,302 1000,261 1020,261 1032,297 1062,297 1078,303"/>
</g>
<!-- deposit -->
<path fill="none" stroke="#00aa00" stroke-width="2" d="M35 870V915M46 871V915M57 871V915M68 871V915M79 871V915M90 872V915M105 871V915M112 870V915M127 872V915M138 872V915M149 871V915M160 872V915M171 872V915M182 871V915M193 871V915M204 870V915M215 870V915M233 869V915M244 868V915M259 868V915M274 868V915M285 869V915M296 869V915M314 868V915M329 867V915M343 867V915M354 866V915M365 867V915M376 867V915M391 867V915M402 867V915M413 868V915M420 868V915M431 868V915M446 869V915M457 867V915M472 868V915M483 868V915M494 868V915M501 868V915M512 868V915M527 869V915M534 868V915M553 869V915M567 869V915M578 870V915M589 870V915M604 871V915M608 870V915M611 870V915M615 871V915M626 871V915M637 870V915M648 870V915M660 871V915M668 871V915M680 870V915M693 871V915M705 871V915M716 870V915M728 870V915M741 871V915M753 870V915M763 870V915M775 871V915M788 870V915M800 870V915M811 871V915M823 870V915M836 870V915M848 871V915M860 870V915M872 871V915M884 870V915M897 870V915M909 871V915M921 870V915M933 870V915M946 871V915M958 870V915M970 870V915M982 871V915M994 870V915M1007 871V915M1019 870V915M1031 870V915M1044 871V915M1056 870V915M1068 871V915M1080 870V915M1092 870V915M1104 871V915M1117 870V915M1129 870V915M1141 871V915M1153 870V915M1166 871V915M1178 870V915M1190 870V915M1202 871V915M1214 870V915M1226 870V915M1239 871V915M1251 870V915M1263 871V915M1275 870V915M1287 870V915M1300 871V915M1312 870V915M1324 871V915M1336 870V915M1348 870V915M1360 871V915M1373 870V915M1385 871V915M1397 870V915M1409 870V915M1421 871V915M1434 870V915M1446 871V915M1458 870V915M1470 870V915M1482 871V915M1494 870V915M1510 870V915M1518 871V915M1532 871V915M1540 871V915M1551 871V915M1562 871V915M1573 871V915M1584 871V915M1595 872V915M1606 872V915M1617 874V915M1628 875V915M1639 874V915M1653 876V915M1657 875V915M1661 875V915M1664 876V915M1675 871V915M1686 871V915M1694 871V915M1708 871V915M1719 870V915M1730 869V915M1738 870V915M1752 869V915M1767 868V915M1778 868V915M1789 868V915M1800 868V915M1811 869V915M1822 868V915M1837 868V915M1851 868V915"/>
<!-- panel frames -->
<text x="1871" y="837" class="q" textLength="35" lengthAdjust="spacingAndGlyphs">39631</text>
<path d="M31.500 497.500H1866.500V832.500H31.500zM31.500 834.500H1866.500V915.500H31.500z" fill="none" stroke="#c4c4c4" shape-rendering="crispEdges"/>
<path d="M72.500 915v3M112.500 915v3M152.500 915v3M192.500 915v3M232.500 915v3M272.500 915v3M312.500 915v3M352.500 915v3M392.500 915v3M432.500 915v3M472.500 915v3M512.500 915v3M552.500 915v3M592.500 915v3M632.500 915v3M672.500 915v3M712.500 915v3M752.500 915v3M792.500 915v3M832.500 915v3M872.500 915v3M912.500 915v3M952.500 915v3M992.500 915v3M1032.500 915v3M1072.500 915v3M1112.500 915v3M1152.500 915v3M1192.500 915v3M1232.500 915v3M1272.500 915v3M1312.500 915v3M1352.500 915v3M1392.500 915v3M1432.500 915v3M1472.500 915v3M1512.500 915v3M1552.500 915v3M1592.500 915v3M1632.500 915v3M1672.500 915v3M1712.500 915v3M1752.500 915v3M1792.500 915v3M1832.500 915v3" stroke="#c4c4c4" shape-rendering="crispEdges"/>
<text x="36" y="512" font-size="12"><tspan fill="#2a7fd6">Balance</tspan><tspan fill="#bdbdbd"> / </tspan><tspan fill="#00aa00">Equity</tspan></text>
<text x="36" y="849" font-size="12.5" fill="#c6c6c6" textLength="71" lengthAdjust="spacingAndGlyphs">Deposit Load</text>
<g>
<text class="q" x="1871" y="517" textLength="35" lengthAdjust="spacingAndGlyphs">41815</text><text class="q" x="1871" y="557" textLength="35" lengthAdjust="spacingAndGlyphs">41542</text><text class="q" x="1871" y="597" textLength="35" lengthAdjust="spacingAndGlyphs">41269</text><text class="q" x="1871" y="637" textLength="35" lengthAdjust="spacingAndGlyphs">40996</text><text class="q" x="1871" y="677" textLength="35" lengthAdjust="spacingAndGlyphs">40723</text><text class="q" x="1871" y="717" textLength="35" lengthAdjust="spacingAndGlyphs">40450</text><text class="q" x="1871" y="757" textLength="35" lengthAdjust="spacingAndGlyphs">40177</text><text class="q" x="1871" y="797" textLength="35" lengthAdjust="spacingAndGlyphs">39904</text>
<text class="q" x="1871" y="847" textLength="29" lengthAdjust="spacingAndGlyphs">1.0%</text><text class="q" x="1871" y="920" textLength="29" lengthAdjust="spacingAndGlyphs">0.0%</text>
</g>
<g>
<text class="d" x="33" y="929" textLength="64" lengthAdjust="spacingAndGlyphs">2020.01.06</text><text class="d" x="113" y="929" textLength="64" lengthAdjust="spacingAndGlyphs">2020.03.16</text><text class="d" x="193" y="929" textLength="64" lengthAdjust="spacingAndGlyphs">2020.05.21</text><text class="d" x="273" y="929" textLength="64" lengthAdjust="spacingAndGlyphs">2020.10.21</text><text class="d" x="353" y="929" textLength="64" lengthAdjust="spacingAndGlyphs">2021.01.07</text><text class="d" x="433" y="929" textLength="64" lengthAdjust="spacingAndGlyphs">2021.03.30</text><text class="d" x="513" y="929" textLength="64" lengthAdjust="spacingAndGlyphs">2021.08.05</text><text class="d" x="593" y="929" textLength="64" lengthAdjust="spacingAndGlyphs">2021.11.19</text><text class="d" x="673" y="929" textLength="64" lengthAdjust="spacingAndGlyphs">2022.02.21</text><text class="d" x="753" y="929" textLength="64" lengthAdjust="spacingAndGlyphs">2022.06.13</text><text class="d" x="833" y="929" textLength="64" lengthAdjust="spacingAndGlyphs">2022.09.23</text><text class="d" x="913" y="929" textLength="64" lengthAdjust="spacingAndGlyphs">2022.11.10</text><text class="d" x="993" y="929" textLength="64" lengthAdjust="spacingAndGlyphs">2023.03.21</text><text class="d" x="1073" y="929" textLength="64" lengthAdjust="spacingAndGlyphs">2023.05.26</text><text class="d" x="1153" y="929" textLength="64" lengthAdjust="spacingAndGlyphs">2023.07.27</text><text class="d" x="1233" y="929" textLength="64" lengthAdjust="spacingAndGlyphs">2023.11.03</text><text class="d" x="1313" y="929" textLength="64" lengthAdjust="spacingAndGlyphs">2024.02.01</text><text class="d" x="1393" y="929" textLength="64" lengthAdjust="spacingAndGlyphs">2024.06.03</text><text class="d" x="1473" y="929" textLength="64" lengthAdjust="spacingAndGlyphs">2024.08.12</text><text class="d" x="1553" y="929" textLength="64" lengthAdjust="spacingAndGlyphs">2024.10.21</text><text class="d" x="1633" y="929" textLength="64" lengthAdjust="spacingAndGlyphs">2025.01.02</text><text class="d" x="1713" y="929" textLength="64" lengthAdjust="spacingAndGlyphs">2025.04.10</text><text class="d" x="1793" y="929" textLength="64" lengthAdjust="spacingAndGlyphs">2025.07.14</text>
</g>
<path d="M27 935.500H346M410 935.500H1919" stroke="#a8a8a8" shape-rendering="crispEdges"/>
</svg>
</body></html>
